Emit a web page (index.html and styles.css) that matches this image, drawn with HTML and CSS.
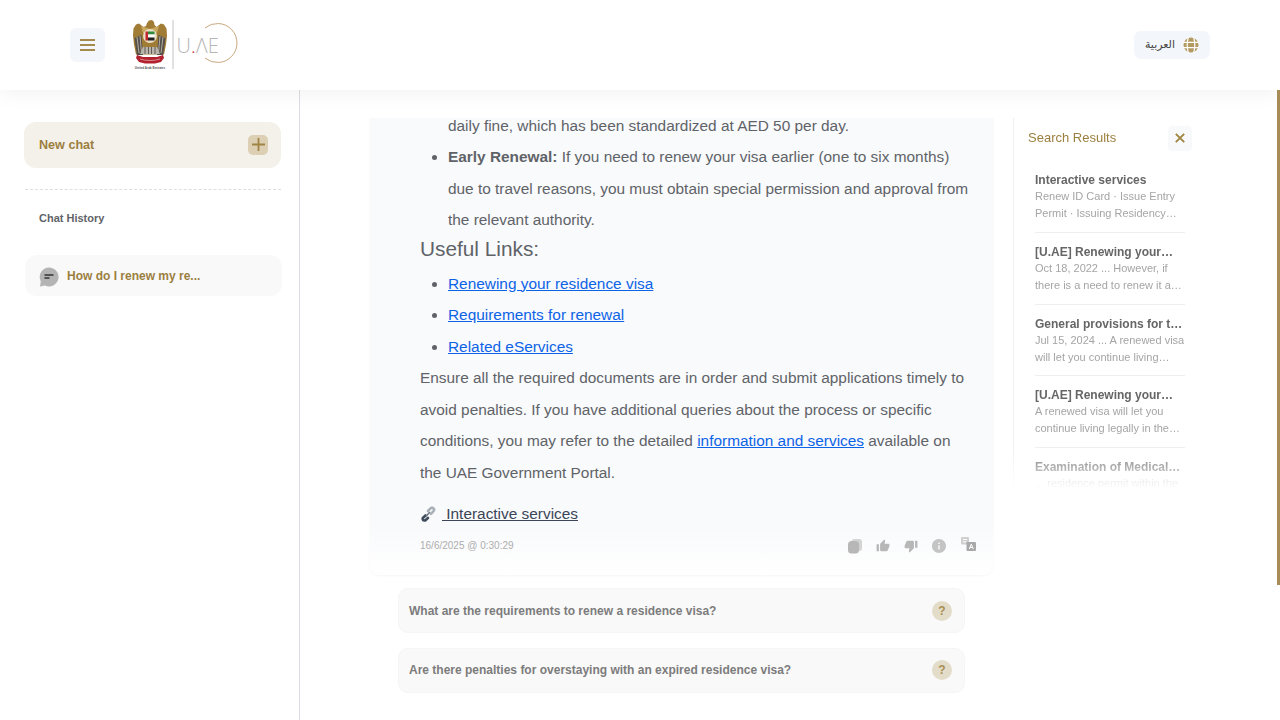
FILE: index.html
```html
<!DOCTYPE html>
<html lang="en">
<head>
<meta charset="utf-8">
<title>U.AE Chat</title>
<link rel="stylesheet" href="styles.css">
</head>
<body>
<div class="page">
  <header class="topbar">
    <div class="brand">
      <button class="menu-btn" aria-label="Menu"><span></span><span></span><span></span></button>
      <svg class="logo" width="110" height="54" viewBox="0 0 110 54">
        <g transform="translate(1 2)">
          <path d="M14 4l2-2.500 3-.5 2 2 .5 3 2 2 4.500-3.500 3 1 2.500 4 .5 7-1 9-2 10H3l-2-10-1-9 .5-7 2.500-4 3-1 4.500 3.500 2.500-1z" fill="#a17c35"/>
          <path d="M8 7l9 3 9-3-2 7H10z" fill="#c9a860"/>
          <path d="M1.500 19l2.500 17h6l-1.500-20zM32.500 19l-2.500 17h-6l1.500-20z" fill="#55504a"/>
          <path d="M4 18l2 16M7 17l1.500 17M30 18l-2 16M27 17l-1.500 17" stroke="#cfc7b5" stroke-width=".8"/>
          <circle cx="17" cy="17" r="7" fill="#e9dfc5"/>
          <rect x="12.500" y="12.500" width="2.500" height="9" fill="#c4262e"/>
          <rect x="15" y="12.500" width="6.500" height="3" fill="#2e8b3d"/>
          <rect x="15" y="15.500" width="6.500" height="3" fill="#fff"/>
          <rect x="15" y="18.500" width="6.500" height="3" fill="#222"/>
          <path d="M10 28h14l3 7H7z" fill="#b9b5ac"/>
          <path d="M12 28v7M15.500 28v7M18.500 28v7M22 28v7" stroke="#57534b" stroke-width=".9"/>
          <path d="M4 36l6 2h14l6-2 1 3-3 4-6 1.500h-10L6 43l-3-4z" fill="#b3212f"/>
          <path d="M7 40c5 2 15 2 20 0" stroke="#e7b9b9" stroke-width=".7" fill="none"/>
          <text class="logo-small" x="17" y="49.500" text-anchor="middle">United Arab Emirates</text>
        </g>
        <line x1="41" y1="3" x2="41" y2="52" stroke="#c4c4c4"/>
        <path d="M73 11A19.500 19.500 0 1 1 73 41" fill="none" stroke="#c8a77e"/>
        <text class="logo-word" x="44.500" y="35.500">U<tspan class="logo-dot">.</tspan>ΛE</text>
      </svg>
    </div>
    <button class="lang-btn">
      <span class="lang-text" lang="ar" dir="rtl">العربية</span>
      <svg width="16" height="16" viewBox="0 0 16 16" fill="#b39a63">
        <path d="M8 .500a7.500 7.500 0 1 0 0 15 7.500 7.500 0 0 0 0-15z"/>
        <path d="M0 5.300h16M0 10.700h16M5.400 0c-1.500 5-1.500 11 0 16M10.600 0c1.500 5 1.500 11 0 16" stroke="#fff" stroke-width="1.200" fill="none"/>
      </svg>
    </button>
  </header>

  <div class="body">
    <aside class="sidebar">
      <div class="new-chat">
        <span>New chat</span>
        <span class="plus"><svg width="13" height="13" viewBox="0 0 13 13"><path d="M6.500 0v13M0 6.500h13" stroke="#a08443" stroke-width="1.800"/></svg></span>
      </div>
      <div class="side-sep"></div>
      <div class="history-label">Chat History</div>
      <div class="history-item">
        <svg width="20" height="20" viewBox="0 0 20 20">
          <path d="M10 .500a9.500 9.500 0 1 1-4 18.100L1 19.500l.8-5A9.500 9.500 0 0 1 10 .500z" fill="#b4b4b4"/>
          <path d="M5.500 8h9M5.500 11h5" stroke="#333" stroke-width="1.300"/>
        </svg>
        <span>How do I renew my re...</span>
      </div>
    </aside>

    <main class="main">
      <section class="chat-col">
        <article class="card">
          <div class="card-scroll">
            <ul class="list">
              <li class="cont">daily fine, which has been standardized at AED 50 per day.</li>
              <li><strong>Early Renewal:</strong> If you need to renew your visa earlier (one to six months) due to travel reasons, you must obtain special permission and approval from the relevant authority.</li>
            </ul>
            <h3 class="links-title">Useful Links:</h3>
            <ul class="list">
              <li><a href="#">Renewing your residence visa</a></li>
              <li><a href="#">Requirements for renewal</a></li>
              <li><a href="#">Related eServices</a></li>
            </ul>
            <p class="para">Ensure all the required documents are in order and submit applications timely to avoid penalties. If you have additional queries about the process or specific conditions, you may refer to the detailed <a href="#">information and services</a> available on the UAE Government Portal.</p>
            <div class="source">
              <svg width="16" height="16" viewBox="0 0 16 16" fill="none">
                <path d="M5.500 9.500L2.800 12a2 2 0 0 0 0 1.500 2 2 0 0 0 1.700 1c.5 0 1-.2 1.300-.5L8 11.800" stroke="#3f4a5c" stroke-width="2.600" stroke-linecap="round"/>
                <path d="M8 5l2.500-2.700a2 2 0 0 1 3 .2 2 2 0 0 1 0 2.700L11 7.800" stroke="#a9b0b8" stroke-width="2.600" stroke-linecap="round"/>
                <path d="M6.500 9.800l3-3.300" stroke="#6d7683" stroke-width="1.600" stroke-linecap="round"/>
              </svg>
              <a href="#"> Interactive services</a>
            </div>
            <div class="meta">
              <span class="date">16/6/2025 @ 0:30:29</span>
              <div class="actions">
                <svg width="14" height="16" viewBox="0 0 14 16" fill="#b7b7b7"><rect x="3.500" y="1" width="10.500" height="12" rx="3" fill="#d4d4d4"/><rect x="0" y="3" width="11" height="12.500" rx="3.500"/></svg>
                <svg width="14" height="14" viewBox="0 0 24 24" fill="#b7b7b7"><path d="M1 21h4V9H1v12zm22-11c0-1.100-.9-2-2-2h-6.310l.95-4.570.03-.32c0-.41-.17-.79-.44-1.060L14.170 1 7.590 7.590C7.220 7.950 7 8.450 7 9v10c0 1.100.9 2 2 2h9c.83 0 1.540-.5 1.840-1.220l3.020-7.050c.09-.23.14-.47.14-.73v-2z"/></svg>
                <svg width="14" height="14" viewBox="0 0 24 24" fill="#b7b7b7"><path d="M15 3H6c-.83 0-1.540.5-1.840 1.220l-3.020 7.050c-.09.23-.14.47-.14.73v2c0 1.100.9 2 2 2h6.310l-.95 4.570-.03.32c0 .41.17.79.44 1.060L9.830 23l6.590-6.590c.36-.36.58-.86.58-1.410V5c0-1.100-.9-2-2-2zm4 0v12h4V3h-4z"/></svg>
                <svg width="14" height="14" viewBox="2 2 20 20" fill="#c4c4c4"><path d="M12 2C6.480 2 2 6.480 2 12s4.480 10 10 10 10-4.480 10-10S17.520 2 12 2zm1 15h-2v-6h2v6zm0-8h-2V7h2v2z"/></svg>
                <svg class="translate" width="15" height="14" viewBox="0 0 15 14"><rect x="0" y="0" width="8" height="7.500" rx="1" fill="#cfcfcf"/><path d="M2 2.500h4M2 4.800h3" stroke="#fff"/><rect x="5.500" y="5" width="9.500" height="9" rx="1" fill="#a9a9a9"/><path d="M8.300 12l2-5 2 5M9 10.500h2.600" stroke="#fff" fill="none"/></svg>
              </div>
            </div>
          </div>
        </article>
        <div class="suggest">
          <span>What are the requirements to renew a residence visa?</span>
          <span class="qmark">?</span>
        </div>
        <div class="suggest">
          <span>Are there penalties for overstaying with an expired residence visa?</span>
          <span class="qmark">?</span>
        </div>
      </section>

      <aside class="results">
        <div class="results-head">
          <span class="results-title">Search Results</span>
          <button class="close-btn" aria-label="Close"><svg width="10" height="10" viewBox="0 0 10 10"><path d="M.8.800l8.400 8.400M9.200.800L.8 9.200" stroke="#a08443" stroke-width="1.900"/></svg></button>
        </div>
        <div class="result-list">
          <div class="result">
            <div class="r-title">Interactive services</div>
            <div class="r-text">Renew ID Card · Issue Entry Permit · Issuing Residency…</div>
          </div>
          <div class="result">
            <div class="r-title">[U.AE] Renewing your…</div>
            <div class="r-text">Oct 18, 2022 ... However, if there is a need to renew it a…</div>
          </div>
          <div class="result">
            <div class="r-title">General provisions for t…</div>
            <div class="r-text">Jul 15, 2024 ... A renewed visa will let you continue living…</div>
          </div>
          <div class="result">
            <div class="r-title">[U.AE] Renewing your…</div>
            <div class="r-text">A renewed visa will let you continue living legally in the…</div>
          </div>
          <div class="result">
            <div class="r-title">Examination of Medical…</div>
            <div class="r-text">... residence permit within the</div>
          </div>
        </div>
      </aside>
    </main>
  </div>
  <div class="scroll-thumb"></div>
</div>
</body>
</html>
```
FILE: styles.css
```css
* { box-sizing: border-box; }
html, body { margin: 0; height: 100%; overflow: hidden; background: #fff; }
body { font-family: "Liberation Sans", Arial, sans-serif; color: #5f6368; }
button { border: 0; padding: 0; font: inherit; }
.page { position: relative; width: 1280px; height: 720px; display: flex; flex-direction: column; overflow: hidden; }

.topbar { height: 90px; flex: none; display: flex; align-items: center; justify-content: space-between; padding: 0 70px; background: #fff; box-shadow: 0 0 22px rgba(0,0,0,.07); position: relative; z-index: 2; }
.brand { display: flex; align-items: center; gap: 27px; }
.menu-btn { width: 35px; height: 34px; background: #f3f6fa; border-radius: 6px; display: flex; flex-direction: column; justify-content: center; align-items: center; gap: 3px; }
.menu-btn span { width: 15px; height: 2px; background: #a58a4c; }
.logo { display: block; margin-top: -3px; }
.logo-small { font-size: 3px; font-weight: 700; fill: #555; }
.logo-word { font-family: "Open Sans", sans-serif; font-weight: 300; font-size: 20px; fill: #b5b5b5; letter-spacing: .2px; }
.logo-dot { fill: #c4262e; }
.lang-btn { width: 76px; height: 28px; background: #f3f6fa; border-radius: 7px; display: flex; align-items: center; justify-content: flex-end; gap: 8px; padding-right: 11px; margin-left: auto; }
.lang-text { font-size: 11px; font-weight: 400; color: #444; font-family: "DejaVu Sans", sans-serif; margin-top: -2px; }

.body { flex: 1; display: flex; min-height: 0; }
.sidebar { width: 300px; flex: none; border-right: 1px solid #dcdce2; padding: 32px 18px 0 24px; }
.new-chat { height: 46px; background: #f4f1ea; border-radius: 12px; display: flex; align-items: center; justify-content: space-between; padding: 0 13px 1px 15px; font-size: 12.600px; font-weight: 700; color: #9c7f3f; }
.plus { width: 20px; height: 20px; background: #dccfb3; border-radius: 5px; display: flex; align-items: center; justify-content: center; }
.side-sep { margin: 21px 0 0 1px; border-top: 1px dashed #dedede; }
.history-label { margin: 22px 0 0 15px; font-size: 11px; font-weight: 700; line-height: 13px; color: #5f6368; }
.history-item { margin: 30px -1px 0 1px; height: 41px; background: #f9f9f9; border-radius: 12px; display: flex; align-items: center; gap: 8px; padding: 2px 0 0 14px; font-size: 12px; font-weight: 700; color: #9c7f3f; }
.history-item span { margin-top: -2px; }

.main { flex: 1; display: flex; align-items: flex-start; padding: 28px 0 0 70px; gap: 20px; min-width: 0; }
.chat-col { width: 623px; flex: none; display: flex; flex-direction: column; align-items: center; }
.card { width: 100%; height: 457px; overflow: hidden; border-radius: 0 0 10px 10px; background: linear-gradient(#f9fafc 0, #f9fafc 90%, #fff 100%); box-shadow: 0 1px 3px rgba(0,0,0,.04); margin-bottom: 13px; }
.card-scroll { margin-top: -8.500px; padding: 0 17px 0 50px; font-size: 15.400px; line-height: 31.500px; color: #5f6368; }
.list { margin: 0; padding: 0 0 0 28px; }
.cont { list-style: none; }
.para { margin: 0; }
.links-title { margin: -1px 0 0; font-size: 20.800px; font-weight: 400; line-height: 27px; padding: 0 0 6px; }
.card-scroll a { color: #0d63e6; }
.source { display: flex; align-items: center; gap: 6px; height: 30px; margin-top: 11px; }
.source a { color: #3b4557; white-space: pre; }
.meta { display: flex; align-items: center; justify-content: space-between; height: 32px; margin-top: .500px; }
.date { font-size: 10px; line-height: 14px; color: #adadad; }
.actions { display: flex; align-items: center; gap: 14px; }
.translate { margin: -3px 0 0 1px; }

.suggest { width: 567px; height: 45px; background: #f9f9f9; border: 1px solid #f5f5f5; border-radius: 10px; display: flex; align-items: center; justify-content: space-between; padding: 0 12px 0 10px; font-size: 12px; font-weight: 700; color: #7c7c7c; margin-bottom: 14.600px; }
.qmark { width: 20px; height: 20px; border-radius: 50%; background: #e3dcc9; color: #a98f55; font-size: 12px; display: flex; align-items: center; justify-content: center; }

.results { width: 179px; flex: none; height: 372px; border-left: 1px solid #f0f0f0; -webkit-mask-image: linear-gradient(#000 0, #000 88%, transparent 100%); mask-image: linear-gradient(#000 0, #000 88%, transparent 100%); overflow: hidden; }
.results-head { height: 40px; display: flex; align-items: center; justify-content: space-between; padding: 0 0 0 14px; font-size: 13px; color: #9c7f3f; }
.results-title { margin-top: -2px; }
.close-btn { width: 24px; height: 25px; background: #f8f9fa; border-radius: 4px; display: flex; align-items: center; justify-content: center; }
.result-list { padding: 3.300px 7px 0 21px; }
.result { height: 71.700px; padding-top: 11px; border-bottom: 1px solid #eee; }
.result:last-child { border-bottom: 0; }
.r-title { font-size: 12px; font-weight: 700; line-height: 16px; color: #666; white-space: nowrap; }
.r-text { font-size: 11px; line-height: 17px; color: #a5a5a5; }

.scroll-thumb { position: absolute; right: 0; top: 90px; width: 3px; height: 495px; background: #a88c55; z-index: 3; }
```
